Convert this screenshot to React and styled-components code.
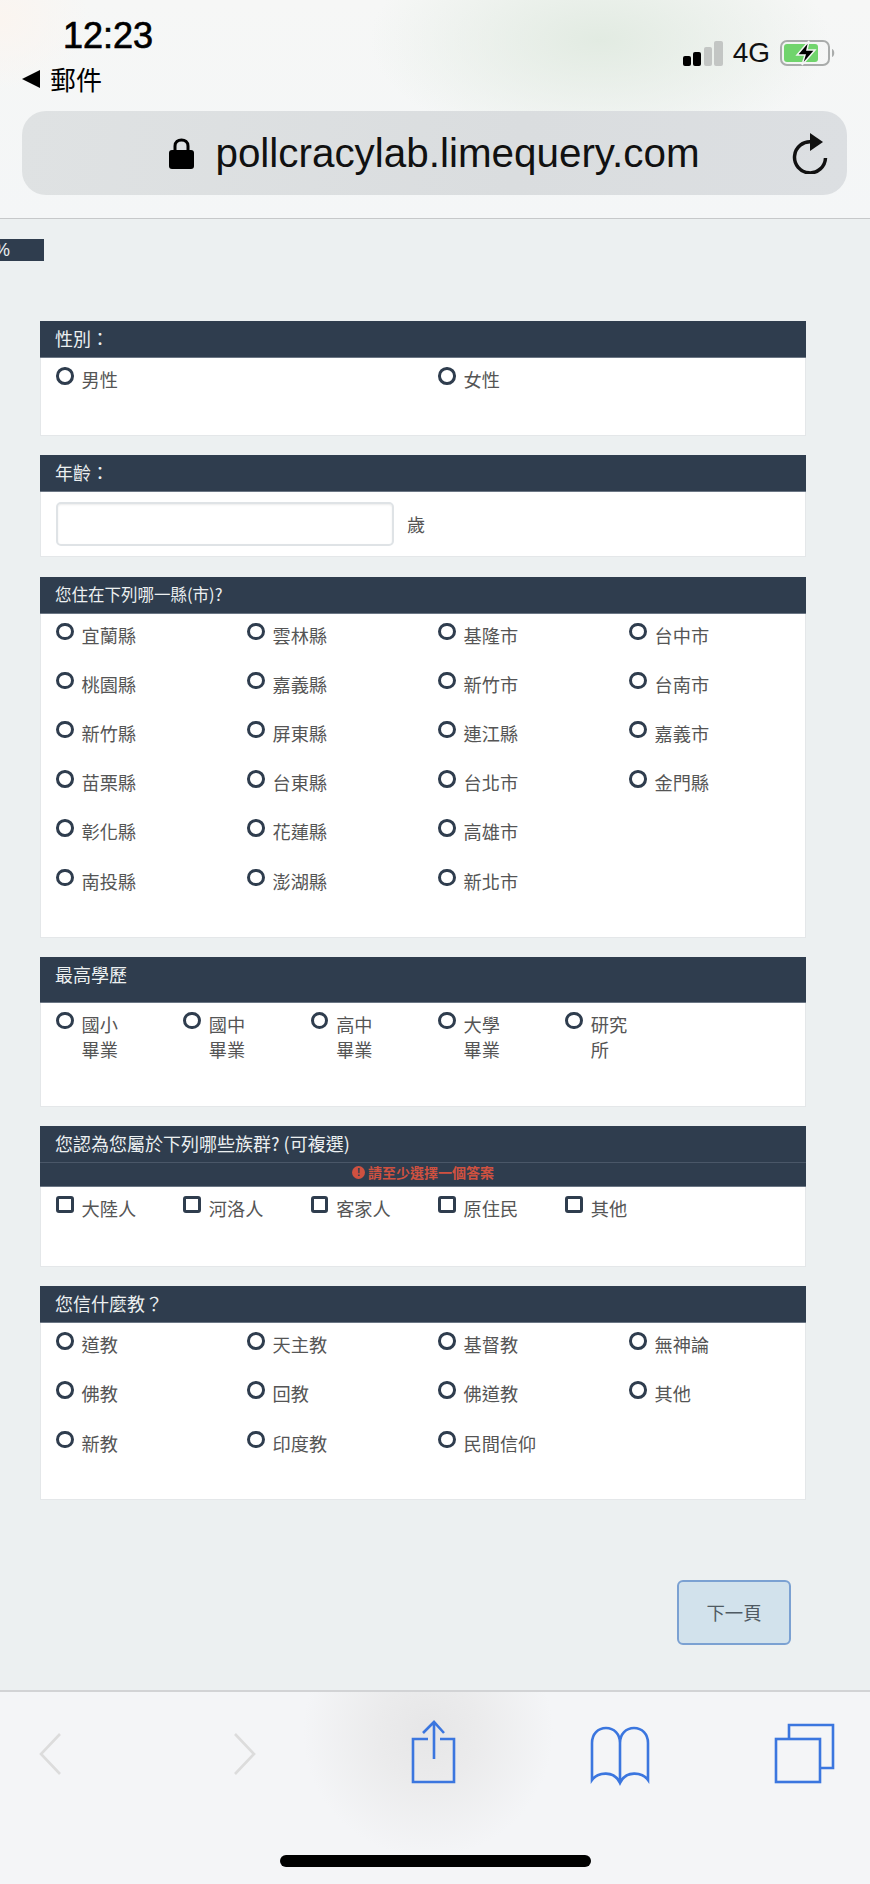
import React from 'react';
import styled, { createGlobalStyle } from 'styled-components';

const cjk = '"Noto Sans CJK TC", "Noto Sans", sans-serif';
const navy = '#2f3d4e';

const GlobalStyle = createGlobalStyle`
  html, body {
    margin: 0;
    padding: 0;
    background: #ecf0f1;
    font-family: ${cjk};
  }
`;

const Screen = styled.div`
  width: 870px;
  height: 1884px;
  display: flex;
  flex-direction: column;
  overflow: hidden;
`;

const BrowserBar = styled.header`
  height: 218px;
  flex: none;
  box-sizing: content-box;
  border-bottom: 1px solid #c6c8ca;
  background:
    radial-gradient(ellipse 230px 110px at 600px 40px, #e2ebe2 0%, rgba(226, 235, 226, 0) 100%),
    radial-gradient(ellipse 90px 70px at 0 20px, #fbf5f0 0%, rgba(251, 245, 240, 0) 100%),
    linear-gradient(#f6f7f6, #f4f6f7);
`;

const StatusRow = styled.div`
  height: 111px;
  box-sizing: border-box;
  padding: 18px 34px 0 22px;
  display: flex;
  justify-content: space-between;
`;

const StatusLeft = styled.div`
  display: flex;
  flex-direction: column;
`;

const Clock = styled.div`
  font-family: "Liberation Sans", Arial, sans-serif;
  font-size: 36px;
  line-height: 36px;
  font-weight: 400;
  -webkit-text-stroke: 0.7px #000;
  color: #000;
  margin-left: 41px;
`;

const BackToMail = styled.div`
  display: flex;
  align-items: center;
  gap: 10px;
  margin-top: 10px;
  font-size: 26px;
  line-height: 30px;
  color: #000;
`;

const BackArrow = styled.span`
  width: 0;
  height: 0;
  border-style: solid;
  border-width: 9px 18px 9px 0;
  border-color: transparent #000 transparent transparent;
`;

const StatusRight = styled.div`
  display: flex;
  align-items: center;
  height: 70px;
  gap: 10px;
`;

const NetworkLabel = styled.span`
  font-family: "Liberation Sans", Arial, sans-serif;
  font-size: 28px;
  line-height: 30px;
  color: #111;
`;

const UrlBar = styled.div`
  height: 84px;
  margin: 0 23px 0 22px;
  border-radius: 24px;
  background: linear-gradient(100deg, #dfe2e3, #dadddf 60%, #dcdfe2);
  display: grid;
  grid-template-columns: 1fr auto 1fr;
  align-items: center;
`;

const UrlText = styled.div`
  grid-column: 2;
  display: flex;
  align-items: center;
  gap: 21px;
  font-family: "Liberation Sans", Arial, sans-serif;
  font-size: 40.4px;
  color: #111;
  white-space: nowrap;
`;

const ReloadIcon = styled.svg`
  grid-column: 3;
  justify-self: end;
  margin-right: 19px;
`;

const Main = styled.main`
  flex: 1;
  background: #ecf0f1;
  padding-top: 20px;
  display: flex;
  flex-direction: column;
`;

const Progress = styled.div`
  width: 44px;
  height: 22px;
  background: ${navy};
  color: #ecf0f1;
  font-family: "Liberation Sans", Arial, sans-serif;
  font-size: 18px;
  line-height: 22px;
  text-indent: -6px;
  overflow: hidden;
  margin-bottom: 60px;
`;

const Panels = styled.div`
  margin: 0 64px 0 40px;
  display: flex;
  flex-direction: column;
  gap: 19.2px;
`;

const Panel = styled.section`
  background: #fff;
  box-shadow: 0 0 0 1px #e4e7e9 inset;
`;

const PanelHeader = styled.div`
  background: ${navy};
  border-bottom: 1px solid #6b7684;
`;

const PanelTitle = styled.h2`
  margin: 0;
  padding: ${(p) => (p.$tall ? '3px 15px 13px' : '3px 15px 4px')};
  font-size: ${(p) => p.$size || 18}px;
  font-weight: 400;
  line-height: 29px;
  color: #ecf0f1;
`;

const ErrorRow = styled.div`
  box-sizing: border-box;
  border-top: 1px solid #4a5768;
  height: 24px;
  padding-bottom: 4px;
  display: flex;
  justify-content: center;
  align-items: center;
  gap: 3px;
  color: #cf5140;
  font-size: 14px;
  line-height: 20px;
  font-weight: 700;
`;

const ErrorIcon = styled.span`
  width: 13px;
  height: 13px;
  border-radius: 50%;
  background: #cf5140;
  color: #2f3d4e;
  font-family: "Liberation Sans", Arial, sans-serif;
  font-size: 11px;
  line-height: 13px;
  font-weight: 700;
  text-align: center;
`;

const OptionGrid = styled.div`
  width: 764px;
  padding: 0 0 ${(p) => (p.$roomy ? 31 : 29)}px 16px;
  display: grid;
  grid-template-columns: repeat(${(p) => p.$cols}, 1fr);
`;

const Option = styled.div`
  display: flex;
  padding: 9px 0 14.6px;
  gap: 8px;
  min-width: 0;
`;

const Mark = styled.span`
  flex: none;
  width: 17.5px;
  height: 17.5px;
  box-sizing: border-box;
  border: 3.8px solid ${navy};
  border-radius: ${(p) => (p.$square ? '3px' : '50%')};
`;

const OptionLabel = styled.span`
  font-size: 18.2px;
  line-height: 25.6px;
  color: #555;
  white-space: pre-line;
`;

const AgeRow = styled.div`
  height: 65px;
  padding: 10px 0 0 16px;
  box-sizing: border-box;
  display: flex;
  align-items: flex-start;
  gap: 13px;
`;

const AgeInput = styled.input`
  width: 338px;
  height: 44px;
  box-sizing: border-box;
  border: 2px solid #dfe3e6;
  border-radius: 5px;
  box-shadow: inset 0 1px 2px rgba(0, 0, 0, 0.08);
  background: #fff;
`;

const AgeUnit = styled.span`
  font-size: 18.2px;
  line-height: 44px;
  color: #555;
`;

const ButtonRow = styled.div`
  display: flex;
  justify-content: flex-end;
  margin: 80px 79px 0 0;
`;

const NextButton = styled.button`
  width: 114px;
  height: 65px;
  border: 2px solid #7ba1d2;
  border-radius: 6px;
  background: #d2e2ec;
  color: #4f5a63;
  font-family: ${cjk};
  font-size: 18.4px;
`;

const Toolbar = styled.footer`
  height: 194px;
  flex: none;
  box-sizing: border-box;
  border-top: 2px solid #d2d3d5;
  padding: 28px 36px 0 20px;
  position: relative;
  background:
    radial-gradient(circle 125px at 428px 40px, #e6e6e7 0%, #ebebec 40%, rgba(244, 245, 247, 0) 100%),
    #f4f5f7;
`;

const ToolbarIcons = styled.div`
  display: flex;
  justify-content: space-between;
`;

const ToolIcon = styled.svg`
  width: 60px;
  height: 65px;
  overflow: visible;
  fill: none;
  stroke: ${(p) => (p.$off ? '#dcdcdc' : '#3b76df')};
  stroke-width: 2.6;
`;

const HomeBar = styled.div`
  position: absolute;
  left: 280px;
  top: 163px;
  width: 311px;
  height: 12px;
  border-radius: 6px;
  background: #000;
`;

const sections = [
  { title: '性別：', cols: 2, options: ['男性', '女性'] },
  {
    title: '您住在下列哪一縣(市)?',
    size: 16.5,
    cols: 4,
    options: [
      '宜蘭縣', '雲林縣', '基隆市', '台中市',
      '桃園縣', '嘉義縣', '新竹市', '台南市',
      '新竹縣', '屏東縣', '連江縣', '嘉義市',
      '苗栗縣', '台東縣', '台北市', '金門縣',
      '彰化縣', '花蓮縣', '高雄市', null,
      '南投縣', '澎湖縣', '新北市',
    ],
  },
  {
    title: '最高學歷',
    tall: true,
    cols: 6,
    options: ['國小\n畢業', '國中\n畢業', '高中\n畢業', '大學\n畢業', '研究\n所'],
  },
  {
    title: '您認為您屬於下列哪些族群? (可複選)',
    error: '請至少選擇一個答案',
    square: true,
    cols: 6,
    options: ['大陸人', '河洛人', '客家人', '原住民', '其他'],
  },
  {
    title: '您信什麼教？',
    cols: 4,
    options: [
      '道教', '天主教', '基督教', '無神論',
      '佛教', '回教', '佛道教', '其他',
      '新教', '印度教', '民間信仰',
    ],
  },
];

function Question({ section }) {
  return (
    <Panel>
      <PanelHeader>
        <PanelTitle $tall={section.tall} $size={section.size}>{section.title}</PanelTitle>
        {section.error && (
          <ErrorRow>
            <ErrorIcon>!</ErrorIcon>
            {section.error}
          </ErrorRow>
        )}
      </PanelHeader>
      <OptionGrid $cols={section.cols} $roomy={section.square}>
        {section.options.map((label, i) =>
          label ? (
            <Option key={i}>
              <Mark $square={section.square} />
              <OptionLabel>{label}</OptionLabel>
            </Option>
          ) : (
            <div key={i} />
          )
        )}
      </OptionGrid>
    </Panel>
  );
}

export default function App() {
  return (
    <Screen>
      <GlobalStyle />
      <BrowserBar>
        <StatusRow>
          <StatusLeft>
            <Clock>12:23</Clock>
            <BackToMail>
              <BackArrow />
              郵件
            </BackToMail>
          </StatusLeft>
          <StatusRight>
            <svg width="40" height="25" viewBox="0 0 40 25">
              <rect x="0" y="15" width="8" height="10" rx="2" fill="#000" />
              <rect x="10" y="11" width="8" height="14" rx="2" fill="#000" />
              <rect x="21" y="6" width="8" height="19" rx="2" fill="#c3c6c4" />
              <rect x="31" y="0" width="9" height="25" rx="2" fill="#c3c6c4" />
            </svg>
            <NetworkLabel>4G</NetworkLabel>
            <svg width="56" height="26" viewBox="0 0 56 26">
              <rect x="1" y="1" width="48" height="24" rx="6" fill="none" stroke="#a9acab" strokeWidth="2" />
              <rect x="4" y="4" width="34" height="18" rx="3" fill="#70d46c" />
              <path d="M52 9 C55 10 55 16 52 17 Z" fill="#a9acab" />
              <path d="M29 1 L17 15 H25 L22 25 L35 10 H27 Z" fill="#000" stroke="#f4f6f5" strokeWidth="1.5" />
            </svg>
          </StatusRight>
        </StatusRow>
        <UrlBar>
          <UrlText>
            <svg width="25" height="31" viewBox="0 0 25 31">
              <path d="M6 14 V8 C6 4 9 2 12.5 2 C16 2 19 4 19 8 V14" fill="none" stroke="#000" strokeWidth="3" />
              <rect x="0" y="12" width="25" height="19" rx="3" fill="#000" />
            </svg>
            pollcracylab.limequery.com
          </UrlText>
          <ReloadIcon width="36" height="41" viewBox="0 0 36 41">
            <path d="M20 9 A15.5 15.5 0 1 0 33.5 25" fill="none" stroke="#111" strokeWidth="3.5" />
            <path d="M18 0 L31 9 L18 18 Z" fill="#111" />
          </ReloadIcon>
        </UrlBar>
      </BrowserBar>

      <Main>
        <Progress>%</Progress>
        <Panels>
          <Question section={sections[0]} />
          <Panel>
            <PanelHeader>
              <PanelTitle>年齡：</PanelTitle>
            </PanelHeader>
            <AgeRow>
              <AgeInput />
              <AgeUnit>歲</AgeUnit>
            </AgeRow>
          </Panel>
          {sections.slice(1).map((section) => (
            <Question key={section.title} section={section} />
          ))}
        </Panels>
        <ButtonRow>
          <NextButton>下一頁</NextButton>
        </ButtonRow>
      </Main>

      <Toolbar>
        <ToolbarIcons>
          <ToolIcon $off viewBox="0 0 60 65">
            <path d="M40 14 L21 34 L40 54" />
          </ToolIcon>
          <ToolIcon $off viewBox="0 0 60 65">
            <path d="M26 14 L45 34 L26 54" />
          </ToolIcon>
          <ToolIcon viewBox="0 0 60 65">
            <path d="M31 19 H16 V62 H57 V19 H43" />
            <path d="M37 39 V2 M26 13 L37 2 L47 13" />
          </ToolIcon>
          <ToolIcon viewBox="0 0 60 65">
            <path d="M34 63 V23 C34 14 28 8 20 8 C12 8 6 14 6 23 V60 C12 52 28 50 34 63 C40 50 56 52 62 60 V23 C62 14 56 8 48 8 C40 8 34 14 34 23" />
          </ToolIcon>
          <ToolIcon viewBox="0 0 60 65">
            <rect x="2" y="19" width="44" height="43" />
            <path d="M15 19 V5 H59 V48 H46" />
          </ToolIcon>
        </ToolbarIcons>
        <HomeBar />
      </Toolbar>
    </Screen>
  );
}
